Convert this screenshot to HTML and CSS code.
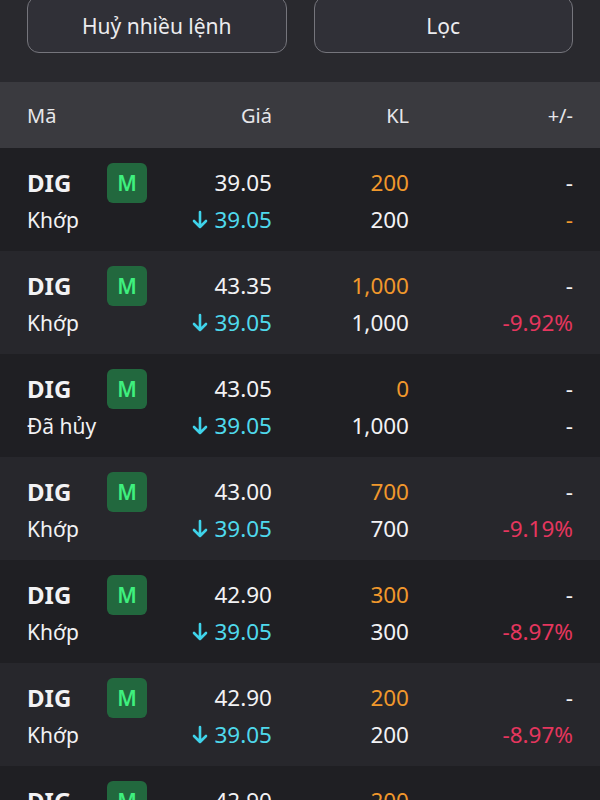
FILE: index.html
```html
<!DOCTYPE html>
<html lang="vi">
<head>
    <meta charset="UTF-8">
    <title>Sổ lệnh</title>
    <link rel="stylesheet" href="styles.css">
</head>
<body>

    <div class="toolbar">
        <button class="tool-btn">Huỷ nhiều lệnh</button>
        <button class="tool-btn">Lọc</button>
    </div>

    <div class="list-head">
        <span class="c-code">Mã</span>
        <span class="c-price">Giá</span>
        <span class="c-vol">KL</span>
        <span class="c-chg">+/-</span>
    </div>

    <div id="orders"></div>

    <script>
        const orders = [
            { price: '39.05', vol: '200', matchVol: '200', status: 'Khớp', chg: '-', chgClass: 'orange' },
            { price: '43.35', vol: '1,000', matchVol: '1,000', status: 'Khớp', chg: '-9.92%', chgClass: 'red' },
            { price: '43.05', vol: '0', matchVol: '1,000', status: 'Đã hủy', chg: '-', chgClass: '' },
            { price: '43.00', vol: '700', matchVol: '700', status: 'Khớp', chg: '-9.19%', chgClass: 'red' },
            { price: '42.90', vol: '300', matchVol: '300', status: 'Khớp', chg: '-8.97%', chgClass: 'red' },
            { price: '42.90', vol: '200', matchVol: '200', status: 'Khớp', chg: '-8.97%', chgClass: 'red' },
            { price: '42.90', vol: '200', matchVol: '200', status: 'Khớp', chg: '-8.97%', chgClass: 'red' }
        ];

        const arrow = `<svg class="arrow" viewBox="0 0 16 20" width="16" height="20">
            <path d="M8 2 V17 M2 11 L8 17 L14 11" fill="none" stroke="currentColor" stroke-width="2.6" stroke-linecap="round" stroke-linejoin="round"/>
        </svg>`;

        const list = document.getElementById('orders');

        orders.forEach((o, i) => {
            const row = document.createElement('div');
            row.className = 'order' + (i % 2 ? ' alt' : '');
            row.innerHTML = `
                <span class="sym">DIG</span>
                <span class="badge">M</span>
                <span class="c-price">${o.price}</span>
                <span class="c-vol orange">${o.vol}</span>
                <span class="c-chg">-</span>
                <span class="status">${o.status}</span>
                <span class="c-price match">${arrow}39.05</span>
                <span class="c-vol">${o.matchVol}</span>
                <span class="c-chg ${o.chgClass}">${o.chg}</span>
            `;
            list.appendChild(row);
        });
    </script>

</body>
</html>
```

FILE: styles.css
```css
body {
    margin: 0;
    background-color: #202024;
    color: #f2f2f4;
    font-family: 'Noto Sans', 'Open Sans', sans-serif;
    overflow: hidden;
}

.toolbar {
    display: flex;
    gap: 27px;
    padding: 0 27px;
    height: 82px;
    background-color: #29292e;
}

.tool-btn {
    flex: 1;
    height: 57px;
    margin-top: -4px;
    background-color: #303037;
    color: #ececef;
    border: 1.5px solid #75757c;
    border-radius: 12px;
    font-family: inherit;
    font-size: 21px;
    padding-top: 4px;
}

.list-head,
.order {
    display: grid;
    grid-template-columns: 80px 40px 125px 137px 164px;
    padding: 0 27px;
    align-items: center;
}

.list-head {
    height: 66px;
    background-color: #3a3a3f;
    color: #e6e6e9;
    font-size: 20px;
}

.list-head .c-code {
    grid-column: 1 / 3;
}

.order {
    grid-template-rows: 37px 37px;
    height: 103px;
    box-sizing: border-box;
    padding-top: 16px;
    padding-bottom: 13px;
    font-size: 22.5px;
    background-color: #1f1f23;
}

.order.alt {
    background-color: #27272c;
}

.c-price,
.c-vol,
.c-chg {
    text-align: right;
}

.sym {
    font-weight: 700;
    font-size: 24px;
}

.badge {
    width: 40px;
    height: 40px;
    border-radius: 6px;
    background-color: #22683e;
    color: #3ff07e;
    font-size: 21px;
    font-weight: 600;
    display: flex;
    align-items: center;
    justify-content: center;
}

.status {
    grid-column: 1 / 3;
    font-size: 21px;
}

.match {
    color: #4fd9ec;
    display: flex;
    justify-content: flex-end;
    align-items: center;
    gap: 6px;
}

.arrow {
    color: #3fd3ea;
}

.orange {
    color: #f0982c;
}

.red {
    color: #e5365e;
}
```
